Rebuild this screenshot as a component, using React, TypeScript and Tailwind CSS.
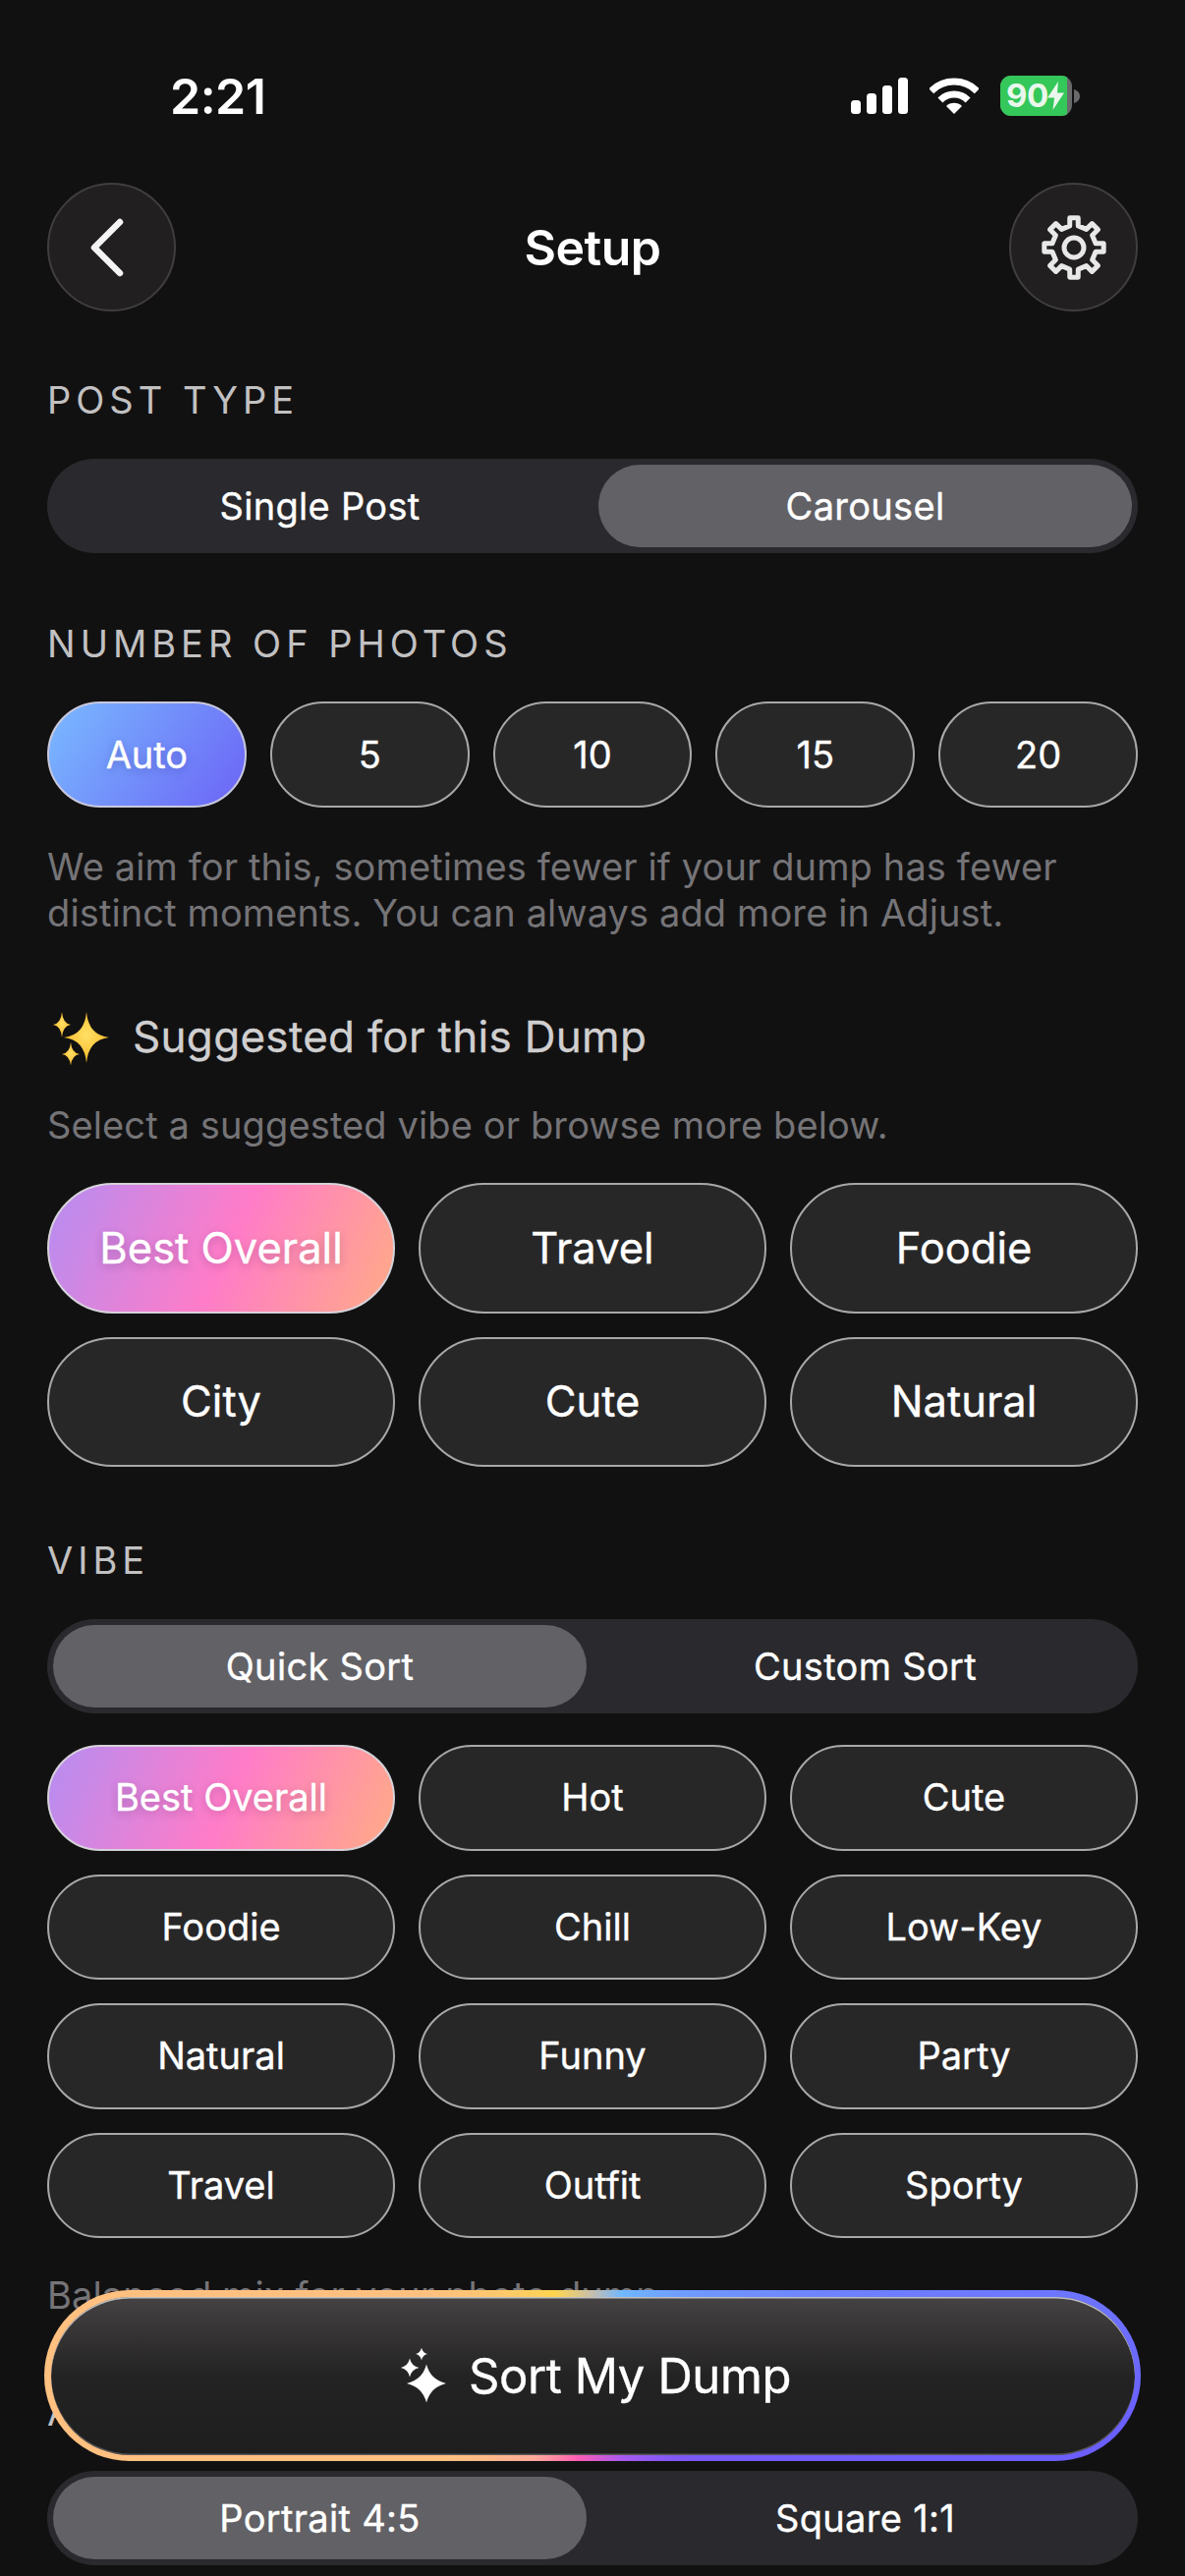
import { useId } from "react";

const LABEL = "h-[46px] text-[38px] leading-[46px] tracking-[5px] text-[#c2c1c2]";
const HINT = "text-[38px] leading-[47px] tracking-[0.12px] text-[#757477]";
const CHIP = "flex items-center justify-center rounded-full border-2 border-[#a9a8a9] bg-[#282728] text-white font-normal [-webkit-text-stroke:0.35px_white]";
const CHIP_ON_VIBE = "flex items-center justify-center rounded-full border-2 border-[#d6d2da] bg-[linear-gradient(114deg,#b58df2_0%,#ff7cc8_52%,#ffab86_100%)] text-white font-normal [-webkit-text-stroke:0.35px_white] [text-shadow:0_3px_8px_rgba(90,40,90,0.3)]";

const VIBES = ["Best Overall", "Hot", "Cute", "Foodie", "Chill", "Low-Key", "Natural", "Funny", "Party", "Travel", "Outfit", "Sporty"];
const SUGGESTED = ["Best Overall", "Travel", "Foodie", "City", "Cute", "Natural"];
const COUNTS = ["Auto", "5", "10", "15", "20"];

function star(cx: number, cy: number, rx: number, ry: number, k = 0.14) {
  const a = rx * k;
  const b = ry * k;
  return `M${cx} ${cy - ry}Q${cx + a} ${cy - b} ${cx + rx} ${cy}Q${cx + a} ${cy + b} ${cx} ${cy + ry}Q${cx - a} ${cy + b} ${cx - rx} ${cy}Q${cx - a} ${cy - b} ${cx} ${cy - ry}Z`;
}

function gearPath(cx: number, cy: number, outer: number, root: number) {
  const pts: string[] = [];
  const at = (r: number, deg: number) => {
    const t = (deg * Math.PI) / 180;
    return `${(cx + r * Math.sin(t)).toFixed(2)} ${(cy - r * Math.cos(t)).toFixed(2)}`;
  };
  for (let i = 0; i < 8; i++) {
    const d = i * 45;
    pts.push(at(root, d - 11), at(outer, d - 8), at(outer, d + 8), at(root, d + 11));
  }
  return `M${pts.join("L")}Z`;
}

function Signal() {
  return (
    <svg width="58" height="37" viewBox="0 0 58 37" fill="white">
      <rect x="0" y="23" width="10" height="14" rx="3.5" />
      <rect x="16" y="16" width="10" height="21" rx="3.5" />
      <rect x="32" y="8" width="10" height="29" rx="3.5" />
      <rect x="48" y="0" width="10" height="37" rx="3.5" />
    </svg>
  );
}

function Wifi() {
  return (
    <svg width="50" height="37" viewBox="0 0 50 37" fill="none" stroke="white" strokeWidth="7">
      <path d="M1.7 13.7A33 33 0 0 1 48.3 13.7" />
      <path d="M10.9 22.9A20 20 0 0 1 39.1 22.9" />
      <path d="M25 37L17 29A11.3 11.3 0 0 1 33 29Z" fill="white" stroke="none" />
    </svg>
  );
}

function Battery() {
  return (
    <div className="flex items-center gap-[2px]">
      <div className="h-[41px] w-[73px] overflow-hidden rounded-[11px] bg-[#69686b]">
        <div className="flex h-full w-[68px] items-center bg-[#34c759] pl-[6px]">
          <span className="text-[33px] leading-none font-bold tracking-[-0.5px] text-[#e9f7ec]">90</span>
          <svg width="18" height="29" viewBox="0 0 18 29" fill="#e9f7ec" className="ml-[-1px] shrink-0">
            <path d="M11 0L0 16.5H7L5.5 29L17 11.5H10Z" />
          </svg>
        </div>
      </div>
      <svg width="6" height="14" viewBox="0 0 6 14" fill="#69686b">
        <path d="M0 0C3.5 1 6 3.5 6 7C6 10.5 3.5 13 0 14Z" />
      </svg>
    </div>
  );
}

function RoundButton({ children }: { children: React.ReactNode }) {
  return (
    <div className="flex h-[131px] w-[131px] items-center justify-center rounded-full border-2 border-[#403e3f] bg-[#211f20]">
      {children}
    </div>
  );
}

function Segment({ items, active }: { items: [string, string]; active: number }) {
  return (
    <div className="mt-[37px] grid h-[96px] grid-cols-2 gap-[12px] rounded-[48px] bg-[#2a292d] p-[6px]">
      {items.map((item, i) => (
        <div
          key={item}
          className={`flex items-center justify-center rounded-[42px] text-[38px] font-normal tracking-[0.3px] text-white [-webkit-text-stroke:0.35px_white] ${i === active ? "bg-[#626166]" : ""}`}
        >
          {item}
        </div>
      ))}
    </div>
  );
}

function GoldSparkles() {
  const id = useId();
  return (
    <svg width="58" height="58" viewBox="0 0 58 58" className="shrink-0">
      <defs>
        <radialGradient id={id} cx="50%" cy="45%" r="60%">
          <stop offset="0%" stopColor="#ffe066" />
          <stop offset="70%" stopColor="#fcc234" />
          <stop offset="100%" stopColor="#e89a20" />
        </radialGradient>
      </defs>
      <path d={star(35, 30, 23, 26, 0.09)} fill={`url(#${id})`} />
      <path d={star(10, 17, 9, 13, 0.1)} fill={`url(#${id})`} />
      <path d={star(19, 47, 9, 12, 0.1)} fill={`url(#${id})`} />
    </svg>
  );
}

export default function App() {
  return (
    <div className="relative h-[2622px] w-[1206px] overflow-hidden bg-[#121112] px-12 font-['Inter',sans-serif] antialiased">
      {/* status bar */}
      <div className="flex h-[118px] items-center justify-between pt-[77px]">
        <span className="ml-[125px] text-[50px] leading-none font-semibold tracking-[-0.5px] text-white">2:21</span>
        <div className="mr-[59px] flex items-center gap-[22px]">
          <Signal />
          <Wifi />
          <Battery />
        </div>
      </div>

      {/* header */}
      <div className="mt-[68px] flex h-[131px] items-center justify-between">
        <RoundButton>
          <svg width="44" height="64" viewBox="0 0 44 64" fill="none" stroke="#f4f4f4" strokeWidth="6.5" strokeLinecap="round" strokeLinejoin="round" className="mr-[10px]">
            <path d="M35 6L9 32L35 58" />
          </svg>
        </RoundButton>
        <span className="text-[50px] leading-none font-semibold tracking-[-0.5px] text-white">Setup</span>
        <RoundButton>
          <svg width="72" height="72" viewBox="0 0 72 72" fill="none" stroke="#e8e8e8" strokeWidth="5" strokeLinejoin="round">
            <path d={gearPath(36, 36, 30.5, 22.5)} />
            <circle cx="36" cy="36" r="10" />
          </svg>
        </RoundButton>
      </div>

      <div className={`mt-[67px] ${LABEL}`}>POST TYPE</div>
      <Segment items={["Single Post", "Carousel"]} active={1} />

      <div className={`mt-[69px] ${LABEL}`}>NUMBER OF PHOTOS</div>
      <div className="mt-[36px] grid grid-cols-5 gap-[24px]">
        {COUNTS.map((c, i) => (
          <div
            key={c}
            className={
              i === 0
                ? "flex h-[108px] items-center justify-center rounded-full border-2 border-[#c8c8dc] bg-[linear-gradient(125deg,#79baff_0%,#6c64f6_100%)] text-[38px] font-normal text-white [-webkit-text-stroke:0.35px_white] [text-shadow:0_3px_8px_rgba(40,40,120,0.3)]"
                : `${CHIP} h-[108px] text-[38px]`
            }
          >
            {c}
          </div>
        ))}
      </div>
      <p className={`mt-[37px] ${HINT}`}>
        We aim for this, sometimes fewer if your dump has fewer
        <br />
        distinct moments. You can always add more in Adjust.
      </p>

      <div className="mt-[73px] flex h-[58px] items-center pl-[5px]">
        <GoldSparkles />
        <span className="ml-[24px] text-[44px] font-normal tracking-[0.3px] text-[#d0cfd0] [-webkit-text-stroke:0.3px_#d0cfd0]">Suggested for this Dump</span>
      </div>
      <p className={`mt-[38px] h-[47px] ${HINT}`}>Select a suggested vibe or browse more below.</p>

      <div className="mt-[35px] grid grid-cols-3 gap-[24px]">
        {SUGGESTED.map((s, i) => (
          <div key={s} className={`${i === 0 ? CHIP_ON_VIBE : CHIP} h-[132.5px] text-[43.5px]`}>
            {s}
          </div>
        ))}
      </div>

      <div className={`mt-[72px] ${LABEL}`}>VIBE</div>
      <Segment items={["Quick Sort", "Custom Sort"]} active={0} />

      <div className="mt-[32px] grid grid-cols-3 gap-x-[24px] gap-y-[24px]">
        {VIBES.map((v, i) => (
          <div key={v} className={`${i === 0 ? CHIP_ON_VIBE : CHIP} h-[107.5px] text-[38px]`}>
            {v}
          </div>
        ))}
      </div>
      <p className={`mt-[35px] h-[47px] ${HINT}`}>Balanced mix for your photo dump</p>

      <div className={`mt-[72px] ${LABEL}`}>ASPECT RATIO</div>
      <Segment items={["Portrait 4:5", "Square 1:1"]} active={0} />

      {/* floating call to action */}
      <div className="absolute top-[2331px] left-[45px] h-[174px] w-[1116px] rounded-[87px] bg-[conic-gradient(from_0deg,#c6bfae_0deg,#70b8ff_20deg,#6f8cff_65deg,#6a5fff_95deg,#7a58f6_130deg,#a85af0_160deg,#ff5cb4_190deg,#ffa89a_215deg,#ffc080_240deg,#ffc080_295deg,#ffd54f_335deg,#c6bfae_360deg)] p-[6.5px]">
        <div className="flex h-full items-center justify-center rounded-[81px] bg-[linear-gradient(180deg,#444243_0%,#343233_25%,#242324_50%,#1f1e1f_100%)] pl-[7px] shadow-[inset_0_1.5px_0_rgba(235,235,235,0.75),inset_0_-1.5px_0_rgba(170,170,170,0.4)]">
          <svg width="46" height="56" viewBox="0 0 46 56" fill="white" className="mr-[23px]">
            <path d={star(26, 36, 20, 19.5, 0.2)} />
            <path d={star(9, 20, 9.5, 9.5, 0.18)} />
            <path d={star(21, 6, 6, 6.5, 0.18)} />
          </svg>
          <span className="pt-[2px] text-[49px] font-normal tracking-[-0.4px] text-white [-webkit-text-stroke:0.4px_white]">Sort My Dump</span>
        </div>
      </div>
    </div>
  );
}
